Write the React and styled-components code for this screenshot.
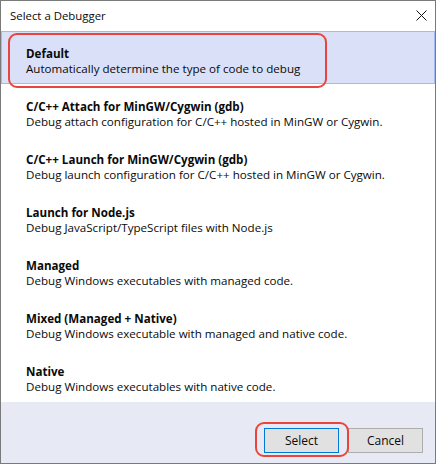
import React from "react";
import styled, { createGlobalStyle } from "styled-components";

const Global = createGlobalStyle`
  html, body { margin: 0; padding: 0; background: #ffffff; }
  body { font-family: "Open Sans", "Noto Sans", sans-serif; }
  * { box-sizing: border-box; }
`;

const Window = styled.div`
  position: relative;
  width: 436px;
  height: 464px;
  border: 1px solid #7a7a7a;
  background: #ffffff;
  display: flex;
  flex-direction: column;
  color: #0a0a0a;
  font-size: 11.6px;
`;

const TitleBar = styled.div`
  height: 30px;
  flex: none;
  display: flex;
  align-items: center;
  justify-content: space-between;
  padding: 0 8px 1px 9px;
  font-size: 11.4px;
`;

const CloseButton = styled.div`
  width: 12px;
  height: 12px;
  display: flex;
  align-items: center;
  justify-content: center;
`;

const List = styled.div`
  flex: 1;
  display: flex;
  flex-direction: column;
`;

const Item = styled.div`
  height: 53px;
  flex: none;
  padding: 14px 0 0 24px;
  border: 1px solid ${(p) => (p.$selected ? "#a3b9ef" : "transparent")};
  background: ${(p) => (p.$selected ? "#dae0f7" : "transparent")};
  line-height: 15px;
`;

const ItemTitle = styled.div`
  font-weight: 700;
`;

const ItemDesc = styled.div``;

const Footer = styled.div`
  height: 61px;
  flex: none;
  background: #e7e9f4;
  display: flex;
  justify-content: flex-end;
  align-items: flex-start;
  gap: 9px;
  padding: 26px 12px 0 0;
`;

const Button = styled.button`
  width: 75px;
  height: 25px;
  margin: 0;
  padding: 0;
  background: #e1e1e1;
  border: 1px solid ${(p) => (p.$default ? "#0078d7" : "#adadad")};
  font-family: inherit;
  font-size: 12px;
  color: #0a0a0a;
`;

const Highlight = styled.div`
  position: absolute;
  border: 2px solid #e8463c;
  border-radius: 9px;
  pointer-events: none;
`;

const items = [
  ["Default", "Automatically determine the type of code to debug"],
  ["C/C++ Attach for MinGW/Cygwin (gdb)", "Debug attach configuration for C/C++ hosted in MinGW or Cygwin."],
  ["C/C++ Launch for MinGW/Cygwin (gdb)", "Debug launch configuration for C/C++ hosted in MinGW or Cygwin."],
  ["Launch for Node.js", "Debug JavaScript/TypeScript files with Node.js"],
  ["Managed", "Debug Windows executables with managed code."],
  ["Mixed (Managed + Native)", "Debug Windows executable with managed and native code."],
  ["Native", "Debug Windows executables with native code."],
];

export default function App() {
  return (
    <>
      <Global />
      <Window>
        <TitleBar>
          <span>Select a Debugger</span>
          <CloseButton>
            <svg width="11" height="11" viewBox="0 0 11 11">
              <path d="M0.5 0.5 L10.5 10.5 M10.5 0.5 L0.5 10.5" stroke="#111" strokeWidth="1" fill="none" />
            </svg>
          </CloseButton>
        </TitleBar>
        <List>
          {items.map(([t, d], i) => (
            <Item key={t} $selected={i === 0}>
              <ItemTitle>{t}</ItemTitle>
              <ItemDesc>{d}</ItemDesc>
            </Item>
          ))}
        </List>
        <Footer>
          <Button $default>Select</Button>
          <Button>Cancel</Button>
        </Footer>
        <Highlight style={{ left: 7, top: 32, width: 319, height: 55 }} />
        <Highlight style={{ left: 254, top: 421, width: 94, height: 35 }} />
      </Window>
    </>
  );
}
